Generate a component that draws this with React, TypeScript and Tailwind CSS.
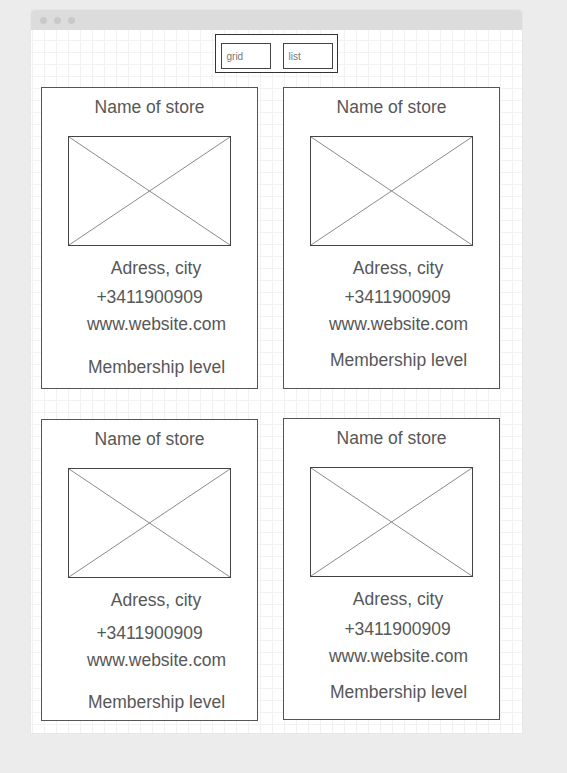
import React from "react";

type CardSpec = {
  addrMt: number;
  phoneMt: number;
  phoneShift: boolean;
  wwwMt: number;
  memMt: number;
  extraTop?: boolean;
};

function Placeholder() {
  return (
    <div className="mt-[19px] w-[163px] h-[110px] border border-[#444] bg-white">
      <svg width="161" height="108" viewBox="0 0 161 108" preserveAspectRatio="none" className="block">
        <line x1="0" y1="0" x2="161" y2="108" stroke="#8a8a8a" strokeWidth="1" />
        <line x1="161" y1="0" x2="0" y2="108" stroke="#8a8a8a" strokeWidth="1" />
      </svg>
    </div>
  );
}

function Card({ spec }: { spec: CardSpec }) {
  return (
    <div
      className={
        "w-[217px] h-[302px] border border-[#555] bg-white flex flex-col items-center text-[17.5px] leading-[20px] text-[#575757] " +
        (spec.extraTop ? "-mt-px" : "")
      }
    >
      <div className="mt-[9px] whitespace-nowrap">Name of store</div>
      <Placeholder />
      <div className="ml-[13px] whitespace-nowrap" style={{ marginTop: spec.addrMt }}>
        Adress, city
      </div>
      <div
        className={"whitespace-nowrap " + (spec.phoneShift ? "ml-[12px]" : "")}
        style={{ marginTop: spec.phoneMt }}
      >
        +3411900909
      </div>
      <div className="ml-[14px] whitespace-nowrap" style={{ marginTop: spec.wwwMt }}>
        www.website.com
      </div>
      <div className="ml-[14px] whitespace-nowrap" style={{ marginTop: spec.memMt }}>
        Membership level
      </div>
    </div>
  );
}

export default function App() {
  const c1: CardSpec = { addrMt: 12, phoneMt: 9, phoneShift: false, wwwMt: 7, memMt: 23 };
  const c2: CardSpec = { addrMt: 12, phoneMt: 9, phoneShift: true, wwwMt: 7, memMt: 16 };
  const c3: CardSpec = { addrMt: 12, phoneMt: 13, phoneShift: false, wwwMt: 7, memMt: 22 };
  const c4: CardSpec = { addrMt: 12, phoneMt: 10, phoneShift: true, wwwMt: 7, memMt: 16, extraTop: true };

  return (
    <div
      className="w-[567px] h-[773px] bg-[#ececec] pt-[10px] pl-[31px]"
      style={{ fontFamily: '"Liberation Sans", Arial, sans-serif' }}
    >
      <div className="w-[491px] h-[723px] flex flex-col shadow-[0_0_1px_rgba(0,0,0,0.12)]">
        <div className="h-[20px] bg-[#dcdcdc] rounded-t-[4px] flex items-center pl-[9px] gap-[7px]">
          <span className="w-[7px] h-[7px] rounded-full bg-[#c9c9c9]" />
          <span className="w-[7px] h-[7px] rounded-full bg-[#c9c9c9]" />
          <span className="w-[7px] h-[7px] rounded-full bg-[#c9c9c9]" />
        </div>
        <div className="flex-1 bg-white bg-[image:linear-gradient(to_right,#f2f2f2_1px,transparent_1px),linear-gradient(to_bottom,#f2f2f2_1px,transparent_1px)] bg-[size:12px_12px] bg-[position:1px_10px] flex flex-col">
          <div className="mt-[4px] self-center ml-[-1px] w-[123px] h-[39px] border border-[#333] bg-white flex items-start pt-[8px] pl-[5px] gap-[12px]">
            <div className="w-[50px] h-[26px] border border-[#444] flex items-center pl-[5px] text-[10px] text-[#777]">
              grid
            </div>
            <div className="w-[50px] h-[26px] border border-[#444] flex items-center pl-[5px] text-[10px] text-[#777]">
              list
            </div>
          </div>
          <div className="mt-[14px] ml-[10px] flex flex-col gap-[30px]">
            <div className="flex gap-[25px] items-start">
              <Card spec={c1} />
              <Card spec={c2} />
            </div>
            <div className="flex gap-[25px] items-start">
              <Card spec={c3} />
              <Card spec={c4} />
            </div>
          </div>
        </div>
      </div>
    </div>
  );
}
